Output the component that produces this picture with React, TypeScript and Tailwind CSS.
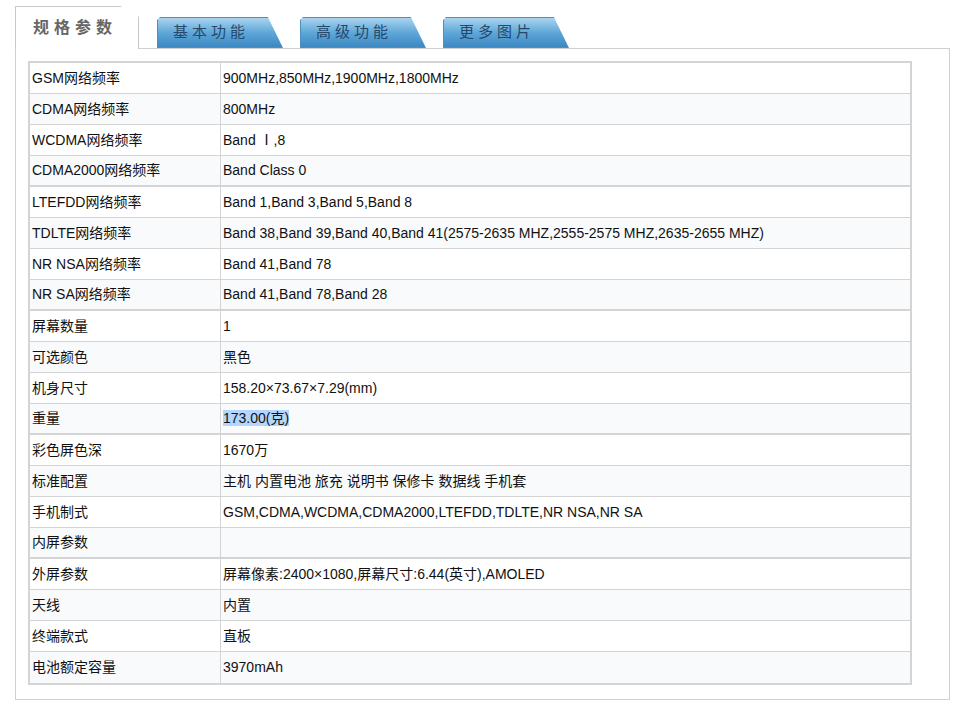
const rows: [string, string, boolean?][] = [
  ['GSM网络频率', '900MHz,850MHz,1900MHz,1800MHz'],
  ['CDMA网络频率', '800MHz'],
  ['WCDMA网络频率', 'Band Ⅰ,8'],
  ['CDMA2000网络频率', 'Band Class 0', true],
  ['LTEFDD网络频率', 'Band 1,Band 3,Band 5,Band 8'],
  ['TDLTE网络频率', 'Band 38,Band 39,Band 40,Band 41(2575-2635 MHZ,2555-2575 MHZ,2635-2655 MHZ)'],
  ['NR NSA网络频率', 'Band 41,Band 78'],
  ['NR SA网络频率', 'Band 41,Band 78,Band 28', true],
  ['屏幕数量', '1'],
  ['可选颜色', '黑色'],
  ['机身尺寸', '158.20×73.67×7.29(mm)'],
  ['重量', '173.00(克)', true],
  ['彩色屏色深', '1670万'],
  ['标准配置', '主机 内置电池 旅充 说明书 保修卡 数据线 手机套'],
  ['手机制式', 'GSM,CDMA,WCDMA,CDMA2000,LTEFDD,TDLTE,NR NSA,NR SA'],
  ['内屏参数', '', true],
  ['外屏参数', '屏幕像素:2400×1080,屏幕尺寸:6.44(英寸),AMOLED'],
  ['天线', '内置'],
  ['终端款式', '直板'],
  ['电池额定容量', '3970mAh'],
];

const Tab = ({ label }: { label: string }) => (
  <div
    className="h-[31px] w-[126px] mr-[17px] flex items-center pl-[15px] text-[15px] tracking-[4px] text-[#24496b] bg-gradient-to-b from-[#a9d3ef] via-[#5fa7d8] to-[#3c88c3] border border-[#4f8fc0]"
    style={{ clipPath: 'polygon(0 3px, 3px 0, 88% 0, 100% 100%, 0 100%)' }}
  >
    {label}
  </div>
);

export default function App() {
  return (
    <div className="w-[959px] h-[706px] bg-white text-[#111]" style={{ fontFamily: '"Liberation Sans", "Noto Sans CJK SC", sans-serif' }}>
      <div className="flex items-end pl-[15px] pt-[5px] h-[48px]">
        <div
          className="h-[43px] w-[124px] mr-[18px] relative -mb-px z-10 bg-white border border-[#c8c8c8] border-b-0 flex items-center pl-[17px] text-[16px] tracking-[5px] text-[#666] font-semibold"
          style={{ clipPath: 'polygon(0 0, 85% 0, 100% 25%, 100% 100%, 0 100%)' }}
        >
          规格参数
        </div>
        <Tab label="基本功能" />
        <Tab label="高级功能" />
        <Tab label="更多图片" />
      </div>
      <div className="mx-[15px] w-[935px] h-[652px] border border-[#d0d0d0] pt-[12px] pl-[12px]">
        <div className="w-[884px] border-2 border-[#d4d4d4]">
          {rows.map(([k, v, thick], i) => (
            <div
              key={k}
              className={`flex h-[31px] text-[14px] items-center ${i % 2 ? 'bg-[#f9fafc]' : 'bg-white'} ${i < rows.length - 1 ? (thick ? 'border-b-2 border-[#d4d4d4]' : 'border-b border-[#d4d4d4]') : ''}`}
            >
              <div className="w-[191px] h-full flex items-center pl-[2px] border-r border-[#d4d4d4]">{k}</div>
              <div className="pl-[2px]">
                {k === '重量' ? <span className="bg-[#b4d5fe]">{v}</span> : v}
              </div>
            </div>
          ))}
        </div>
      </div>
    </div>
  );
}
